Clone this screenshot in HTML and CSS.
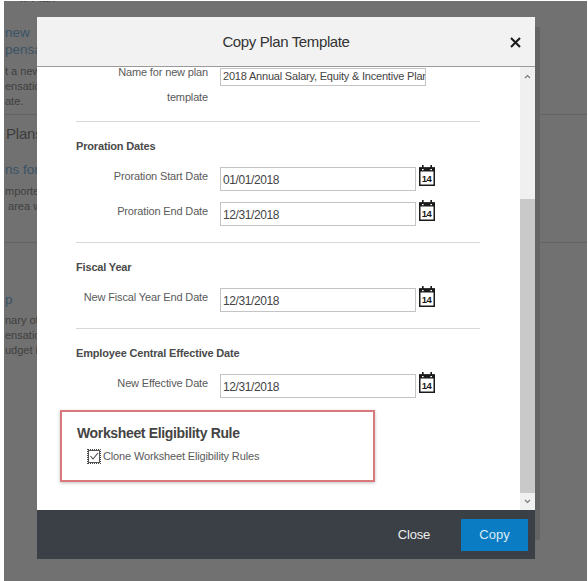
FILE: index.html
```html
<!DOCTYPE html>
<html>
<head>
    <title>Copy Plan Template</title>
    <link rel="stylesheet" href="styles.css">
</head>
<body>
    <div class="backdrop">
        <div class="bg-section bg-first">
            <div class="bg-top">w Plan</div>
            <div class="bg-link">new<br>pensat</div>
            <div class="bg-text">t a new<br>ensatio<br>ate.</div>
        </div>
        <div class="bg-section bg-second">
            <div class="bg-heading">Plans</div>
            <div class="bg-link">ns for</div>
            <div class="bg-text">mporte<br>&nbsp;area w</div>
        </div>
        <div class="bg-section bg-third">
            <div class="bg-link">p</div>
            <div class="bg-text">nary of<br>ensatio<br>udget i</div>
        </div>
    </div>

    <div class="modal">
        <div class="modal-header">
            <span class="modal-title">Copy Plan Template</span>
            <svg class="close-icon" width="11" height="11" viewBox="0 0 11 11"><path d="M1 1 L10 10 M10 1 L1 10" stroke="#1c1c1c" stroke-width="2.1" fill="none"/></svg>
        </div>
        <div class="modal-body">
            <div class="form">
                <div class="row row-name">
                    <label class="row-label">Name for new plan<br>template</label>
                    <div class="text-input input-wide">2018 Annual Salary, Equity &amp; Incentive Plan</div>
                </div>
                <hr class="divider divider-first">

                <h4 class="group-title">Proration Dates</h4>
                <div class="row">
                    <label class="row-label">Proration Start Date</label>
                    <div class="text-input">01/01/2018</div>
                    <svg class="cal-icon" width="16" height="21" viewBox="0 0 16 21"><use href="#cal"/></svg>
                </div>
                <div class="row row-next">
                    <label class="row-label">Proration End Date</label>
                    <div class="text-input">12/31/2018</div>
                    <svg class="cal-icon" width="16" height="21" viewBox="0 0 16 21"><use href="#cal"/></svg>
                </div>
                <hr class="divider">

                <h4 class="group-title">Fiscal Year</h4>
                <div class="row">
                    <label class="row-label">New Fiscal Year End Date</label>
                    <div class="text-input">12/31/2018</div>
                    <svg class="cal-icon" width="16" height="21" viewBox="0 0 16 21"><use href="#cal"/></svg>
                </div>
                <hr class="divider">

                <h4 class="group-title">Employee Central Effective Date</h4>
                <div class="row">
                    <label class="row-label">New Effective Date</label>
                    <div class="text-input">12/31/2018</div>
                    <svg class="cal-icon" width="16" height="21" viewBox="0 0 16 21"><use href="#cal"/></svg>
                </div>

                <div class="rule-box">
                    <div class="rule-title">Worksheet Eligibility Rule</div>
                    <div class="rule-check">
                        <span class="check-focus">
                            <svg width="12" height="13" viewBox="0 0 12 13"><rect x="0.5" y="0.5" width="11" height="12" fill="#fff" stroke="#555"/><path d="M2.5 6 L5 9 L10 3" stroke="#444" stroke-width="1.1" fill="none"/></svg>
                        </span>
                        <span>Clone Worksheet Eligibility Rules</span>
                    </div>
                </div>
            </div>
            <div class="scrollbar">
                <div class="scroll-btn"><svg width="7" height="5" viewBox="0 0 7 5"><path d="M1 4 L3.5 1.5 L6 4" stroke="#777" stroke-width="1.1" fill="none"/></svg></div>
                <div class="scroll-track"></div>
                <div class="scroll-thumb"></div>
                <div class="scroll-btn scroll-btn-down"><svg width="7" height="5" viewBox="0 0 7 5"><path d="M1 1 L3.5 3.5 L6 1" stroke="#777" stroke-width="1.1" fill="none"/></svg></div>
            </div>
        </div>
        <div class="modal-footer">
            <span class="btn-close">Close</span>
            <span class="btn-copy">Copy</span>
        </div>
    </div>

    <svg class="defs" width="0" height="0">
        <defs>
            <g id="cal">
                <rect x="0.75" y="3" width="14.5" height="17.25" fill="#fff" stroke="#1a1a1a" stroke-width="1.5"/>
                <rect x="0" y="2.5" width="16" height="4" fill="#1a1a1a"/>
                <rect x="3" y="0" width="1.6" height="4" fill="#1a1a1a"/>
                <rect x="11.4" y="0" width="1.6" height="4" fill="#1a1a1a"/>
                <rect x="3" y="4" width="1.6" height="1.2" fill="#fff"/>
                <rect x="11.4" y="4" width="1.6" height="1.2" fill="#fff"/>
                <text x="7.6" y="17" text-anchor="middle" font-family="Liberation Sans, sans-serif" font-size="9.5" font-weight="700" letter-spacing="-0.5" fill="#1a1a1a">14</text>
            </g>
        </defs>
    </svg>
</body>
</html>
```

FILE: styles.css
```css
html, body { margin: 0; padding: 0; height: 581px; overflow: hidden; }
body { background: #fff; font-family: "Liberation Sans", Arial, sans-serif; color: #555; position: relative; }

/* page behind the dialog */
.backdrop { margin: 1px 1px 0 4px; height: 580px; background: #717171; color: #3f3f3f; overflow: hidden; font-size: 11px; white-space: nowrap; }
.bg-section { border-bottom: 1px solid #636363; box-sizing: border-box; overflow: hidden; padding-left: 1px; }
.bg-first { height: 114px; }
.bg-second { height: 128px; padding-top: 9px; }
.bg-third { height: 338px; padding-top: 48px; border-bottom: none; }
.bg-top { font-size: 12px; line-height: 12px; margin: -9px 0 0 14px; height: 12px; }
.bg-link { font-size: 13.5px; line-height: 17px; color: #3a5366; }
.bg-first .bg-link { margin-top: 20px; }
.bg-second .bg-link { margin-top: 17px; }
.bg-text { line-height: 15px; margin-top: 6px; }
.bg-third .bg-text { margin-top: 5px; }
.bg-heading { font-size: 15px; letter-spacing: -0.2px; padding-left: 1px; line-height: 20px; color: #3c3c3c; }

/* dialog */
.modal { position: absolute; left: 37px; top: 17px; width: 498px; height: 542px; display: flex; flex-direction: column; background: #fff; }
.modal::after { content: ""; position: absolute; left: 498px; top: 10px; bottom: 19px; width: 5px; background: #646464; }

.modal-header { height: 50px; box-sizing: border-box; flex: none; background: #f2f2f2; border-bottom: 1px solid #9a9a9a; display: flex; align-items: center; justify-content: center; position: relative; }
.modal-title { font-size: 15px; letter-spacing: -0.38px; color: #333; }
.close-icon { position: absolute; right: 14px; top: 20px; }

.modal-body { flex: 1; display: flex; overflow: hidden; }
.form { flex: 1; padding-left: 39px; overflow: hidden; }

.row { display: flex; align-items: flex-start; height: 24px; }
.row-next { margin-top: 11px; }
.row-name { height: auto; margin-top: 1px; }
.row-label { width: 132px; flex: none; text-align: right; font-size: 11px; letter-spacing: -0.15px; line-height: 18px; margin-right: 12px; color: #5a5a5a; white-space: nowrap; }
.row-name .row-label { line-height: 25px; margin-top: -8px; }

.text-input { width: 196px; height: 24px; box-sizing: border-box; border: 1px solid #c4c4c4; font-size: 12px; letter-spacing: -0.4px; line-height: 25px; padding-left: 2px; color: #444; white-space: nowrap; overflow: hidden; }
.input-wide { width: 206px; height: 18px; font-size: 11px; letter-spacing: -0.2px; line-height: 15px; }
.cal-icon { flex: none; margin: -2px 0 0 3px; }

.divider { border: none; border-top: 1px solid #d8d8d8; margin: 16px 0 0; width: 404px; }
.divider-first { margin-top: 11px; }
.group-title { font-size: 11px; letter-spacing: -0.17px; line-height: 14px; font-weight: 700; color: #4a4a4a; margin: 17px 0 14px; }

.rule-box { margin: 12px 0 0 -16px; width: 315px; height: 72px; box-sizing: border-box; border: 2px solid #d9797c; box-shadow: 0 1px 3px rgba(0, 0, 0, 0.25); padding: 13px 0 0 15px; }
.rule-title { font-size: 14px; letter-spacing: -0.35px; font-weight: 700; line-height: 17px; color: #444; }
.rule-check { display: flex; align-items: center; font-size: 11px; letter-spacing: -0.15px; line-height: 16px; margin: 6px 0 0 11px; color: #5a5a5a; }
.check-focus { display: flex; outline: 1px dotted #444; margin-right: 3px; }

.scrollbar { width: 15px; flex: none; display: flex; flex-direction: column; background: #f0f0f0; }
.scroll-btn { height: 16px; flex: none; display: flex; justify-content: center; padding-top: 7px; box-sizing: border-box; }
.scroll-btn-down { height: 17px; padding-top: 6px; }
.scroll-track { height: 116px; flex: none; }
.scroll-thumb { flex: 1; background: #c9c9c9; }

.modal-footer { height: 49px; flex: none; background: #3a4045; display: flex; align-items: center; justify-content: flex-end; box-sizing: border-box; padding-right: 7px; }
.btn-close { color: #eee; font-size: 13px; letter-spacing: -0.2px; margin-right: 31px; }
.btn-copy { width: 67px; height: 32px; background: #0a7cc4; color: #dcecf6; font-size: 13px; line-height: 32px; text-align: center; }

.defs { position: absolute; }
```
